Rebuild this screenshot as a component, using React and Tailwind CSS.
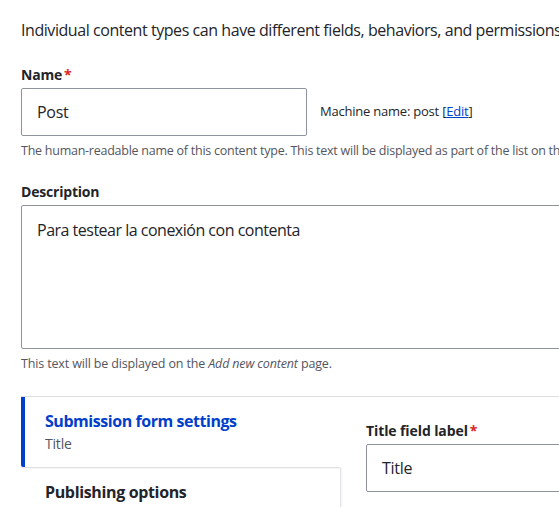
import React from "react";

export default function App() {
  return (
    <div className="w-[559px] h-[507px] overflow-hidden bg-white text-[#232429] font-['Open_Sans',sans-serif]">
      <div className="w-[760px] pl-[21px] pt-[18px]">
        <p className="text-[16px] leading-[24px] tracking-[-0.44px] whitespace-nowrap">
          Individual content types can have different fields, behaviors, and permissions assigned to them.
        </p>

        <div className="mt-[24px]">
          <label className="block text-[14px] leading-[18px] font-bold tracking-[-0.2px]">
            Name<span className="text-[#dc2323] ml-[2px]">*</span>
          </label>
          <div className="mt-[4px] flex items-center">
            <div className="w-[286px] h-[48px] border border-[#8e929c] rounded-[2px] flex items-center px-[15px] text-[16px] tracking-[-0.3px]">
              Post
            </div>
            <span className="ml-[13px] text-[13px] tracking-[-0.22px] whitespace-nowrap">
              Machine name: post [<span className="text-[#003ecc] underline">Edit</span>]
            </span>
          </div>
          <p className="mt-[7px] text-[12.5px] leading-[16px] text-[#545560] tracking-[-0.25px] whitespace-nowrap">
            The human-readable name of this content type. This text will be displayed as part of the list on the <i>Add content</i> page. This name must be unique.
          </p>
        </div>

        <div className="mt-[24px]">
          <label className="block text-[14px] leading-[18px] font-bold tracking-[-0.2px]">
            Description
          </label>
          <div className="mt-[4px] w-[720px] h-[144px] border border-[#8e929c] rounded-[2px] px-[15px] pt-[12px] text-[16px] leading-[24px] tracking-[-0.5px]">
            Para testear la conexión con contenta
          </div>
          <p className="mt-[7px] text-[12.5px] leading-[16px] text-[#545560] tracking-[-0.15px] whitespace-nowrap">
            This text will be displayed on the <i>Add new content</i> page.
          </p>
        </div>

        <div className="mt-[24px] w-[720px] border-t border-[#dedfe4] flex">
          <div className="w-[320px] shrink-0">
            <div className="relative bg-white border-l-[4px] border-[#003ecc] h-[70px] pl-[20px] pt-[13px] shadow-[0_2px_2px_-1px_rgba(0,0,0,0.14)] rounded-bl-[2px]">
              <div className="text-[16px] leading-[22px] font-bold text-[#003ecc] tracking-[-0.45px]">
                Submission form settings
              </div>
              <div className="mt-[1px] text-[14px] leading-[22px] text-[#545560] tracking-[-0.2px]">Title</div>
            </div>
            <div className="mt-[1px] h-[60px] pl-[24px] pt-[13px] border-r border-[#e2e3e8] shadow-[1px_0_2px_rgba(0,0,0,0.05)]">
              <div className="text-[16px] leading-[22px] font-bold tracking-[-0.35px]">Publishing options</div>
            </div>
          </div>
          <div className="pl-[25px] pt-[25px] flex-1">
            <label className="block text-[14px] leading-[18px] font-bold tracking-[-0.1px]">
              Title field label<span className="text-[#dc2323] ml-[2px]">*</span>
            </label>
            <div className="mt-[4px] w-[300px] h-[48px] border border-[#8e929c] rounded-[2px] flex items-center px-[15px] text-[16px] tracking-[-0.3px]">
              Title
            </div>
          </div>
        </div>
      </div>
    </div>
  );
}
